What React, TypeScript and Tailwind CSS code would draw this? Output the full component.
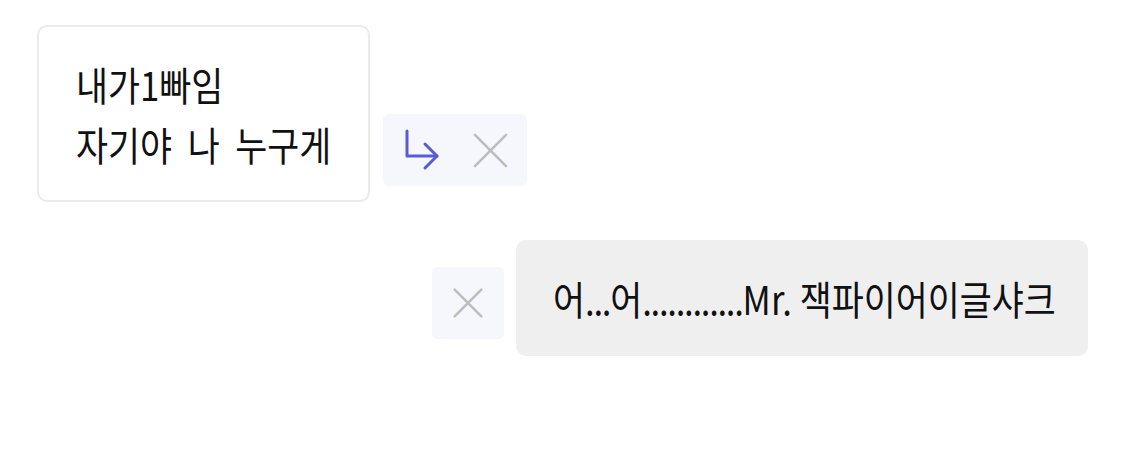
import React from 'react';

const font = { fontFamily: '"Noto Sans CJK KR", "Noto Sans", sans-serif' };

const ReplyIcon = () => (
  <svg width="36" height="42" viewBox="0 0 36 42" fill="none" stroke="#5a5ad6" strokeWidth="3" strokeLinecap="round" strokeLinejoin="round">
    <path d="M3 2v25h30" />
    <path d="M21 15l12 12-12 12" />
  </svg>
);

const CloseIcon = ({ size = 36 }: { size?: number }) => (
  <svg width={size} height={size} viewBox="0 0 36 36" fill="none" stroke="#bdbdbd" strokeWidth={2.6 * (36 / size)} strokeLinecap="round">
    <path d="M2 2l32 32M34 2L2 34" />
  </svg>
);

export default function App() {
  return (
    <div className="min-h-screen bg-white pt-[25px] px-[37px] text-[#111]" style={font}>
      <div className="flex items-end gap-[13px]">
        <div className="w-[333px] h-[177px] border-2 border-[#ebebeb] rounded-[10px] bg-white px-[37px] flex flex-col justify-center">
          <p className="text-[40px] leading-[60px] whitespace-nowrap origin-left scale-x-[0.87] [word-spacing:9px]">내가1빠임</p>
          <p className="text-[40px] leading-[60px] whitespace-nowrap origin-left scale-x-[0.87] [word-spacing:9px]">자기야 나 누구게</p>
        </div>
        <div className="mb-4 w-[144px] h-[72px] rounded-[6px] bg-[#f6f6fd] flex items-center pl-[21px] gap-[33px]">
          <ReplyIcon />
          <CloseIcon size={35} />
        </div>
      </div>

      <div className="mt-[38px] flex items-center justify-end gap-3">
        <div className="mt-[10px] w-[72px] h-[72px] rounded-[6px] bg-[#f6f6fd] flex items-center justify-center">
          <CloseIcon size={30} />
        </div>
        <div className="h-[116px] w-[572px] rounded-[10px] bg-[#efefef] flex items-center pl-[37px]">
          <p className="text-[40px] leading-[57px] whitespace-nowrap origin-left scale-x-[0.87]">
            어<span className="tracking-[-1.5px]">...</span>어<span className="tracking-[-1.5px]">............</span>Mr. 잭파이어이글샤크
          </p>
        </div>
      </div>
    </div>
  );
}
